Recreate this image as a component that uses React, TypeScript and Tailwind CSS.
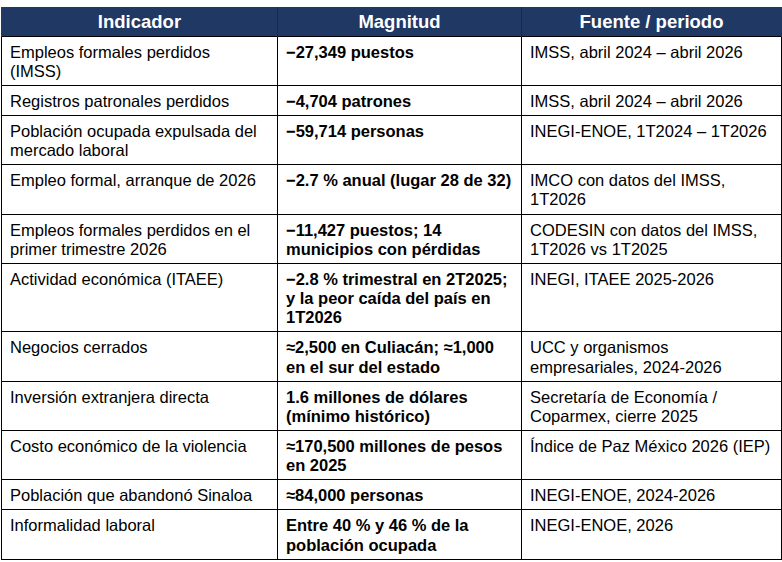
import React from "react";

type Row = { a: React.ReactNode; b: React.ReactNode; c: React.ReactNode };

const rows: Row[] = [
  { a: <>Empleos formales perdidos<br />(IMSS)</>, b: <>−27,349 puestos</>, c: <>IMSS, abril 2024 – abril 2026</> },
  { a: <>Registros patronales perdidos</>, b: <>−4,704 patrones</>, c: <>IMSS, abril 2024 – abril 2026</> },
  { a: <>Población ocupada expulsada del<br />mercado laboral</>, b: <>−59,714 personas</>, c: <>INEGI-ENOE, 1T2024 – 1T2026</> },
  { a: <>Empleo formal, arranque de 2026</>, b: <>−2.7 % anual (lugar 28 de 32)</>, c: <>IMCO con datos del IMSS,<br />1T2026</> },
  { a: <>Empleos formales perdidos en el<br />primer trimestre 2026</>, b: <>−11,427 puestos; 14<br />municipios con pérdidas</>, c: <>CODESIN con datos del IMSS,<br />1T2026 vs 1T2025</> },
  { a: <>Actividad económica (ITAEE)</>, b: <>−2.8 % trimestral en 2T2025;<br />y la peor caída del país en<br />1T2026</>, c: <>INEGI, ITAEE 2025-2026</> },
  { a: <>Negocios cerrados</>, b: <>≈2,500 en Culiacán; ≈1,000<br />en el sur del estado</>, c: <>UCC y organismos<br />empresariales, 2024-2026</> },
  { a: <>Inversión extranjera directa</>, b: <>1.6 millones de dólares<br />(mínimo histórico)</>, c: <>Secretaría de Economía /<br />Coparmex, cierre 2025</> },
  { a: <>Costo económico de la violencia</>, b: <>≈170,500 millones de pesos<br />en 2025</>, c: <>Índice de Paz México 2026 (IEP)</> },
  { a: <>Población que abandonó Sinaloa</>, b: <>≈84,000 personas</>, c: <>INEGI-ENOE, 2024-2026</> },
  { a: <>Informalidad laboral</>, b: <>Entre 40 % y 46 % de la<br />población ocupada</>, c: <>INEGI-ENOE, 2026</> },
];

export default function App() {
  const cell = "border border-black align-top pl-[8px] pr-[2px] pt-[6px] pb-[4px] text-[16.5px] leading-[19.15px] text-black";
  const head = "h-[29px] p-0 pt-[2px] text-center align-middle text-white font-bold text-[18.5px] leading-[22px] border-x border-[#16294a]";
  return (
    <div className="w-[782px] h-[562px] bg-white overflow-hidden" style={{ fontFamily: '"Liberation Sans", Arial, sans-serif' }}>
      <table className="mt-[7px] ml-[1px] w-[780px] table-fixed border-collapse">
        <colgroup>
          <col className="w-[276px]" />
          <col className="w-[244px]" />
          <col className="w-[260px]" />
        </colgroup>
        <thead>
          <tr className="bg-[#1f3864]">
            <th className={head + " border-l-[#1f3864]"}>Indicador</th>
            <th className={head}>Magnitud</th>
            <th className={head + " border-r-[#1f3864]"}>Fuente / periodo</th>
          </tr>
        </thead>
        <tbody>
          {rows.map((r, i) => (
            <tr key={i}>
              <td className={cell}>{r.a}</td>
              <td className={cell + " font-bold"}>{r.b}</td>
              <td className={cell}>{r.c}</td>
            </tr>
          ))}
        </tbody>
      </table>
    </div>
  );
}
